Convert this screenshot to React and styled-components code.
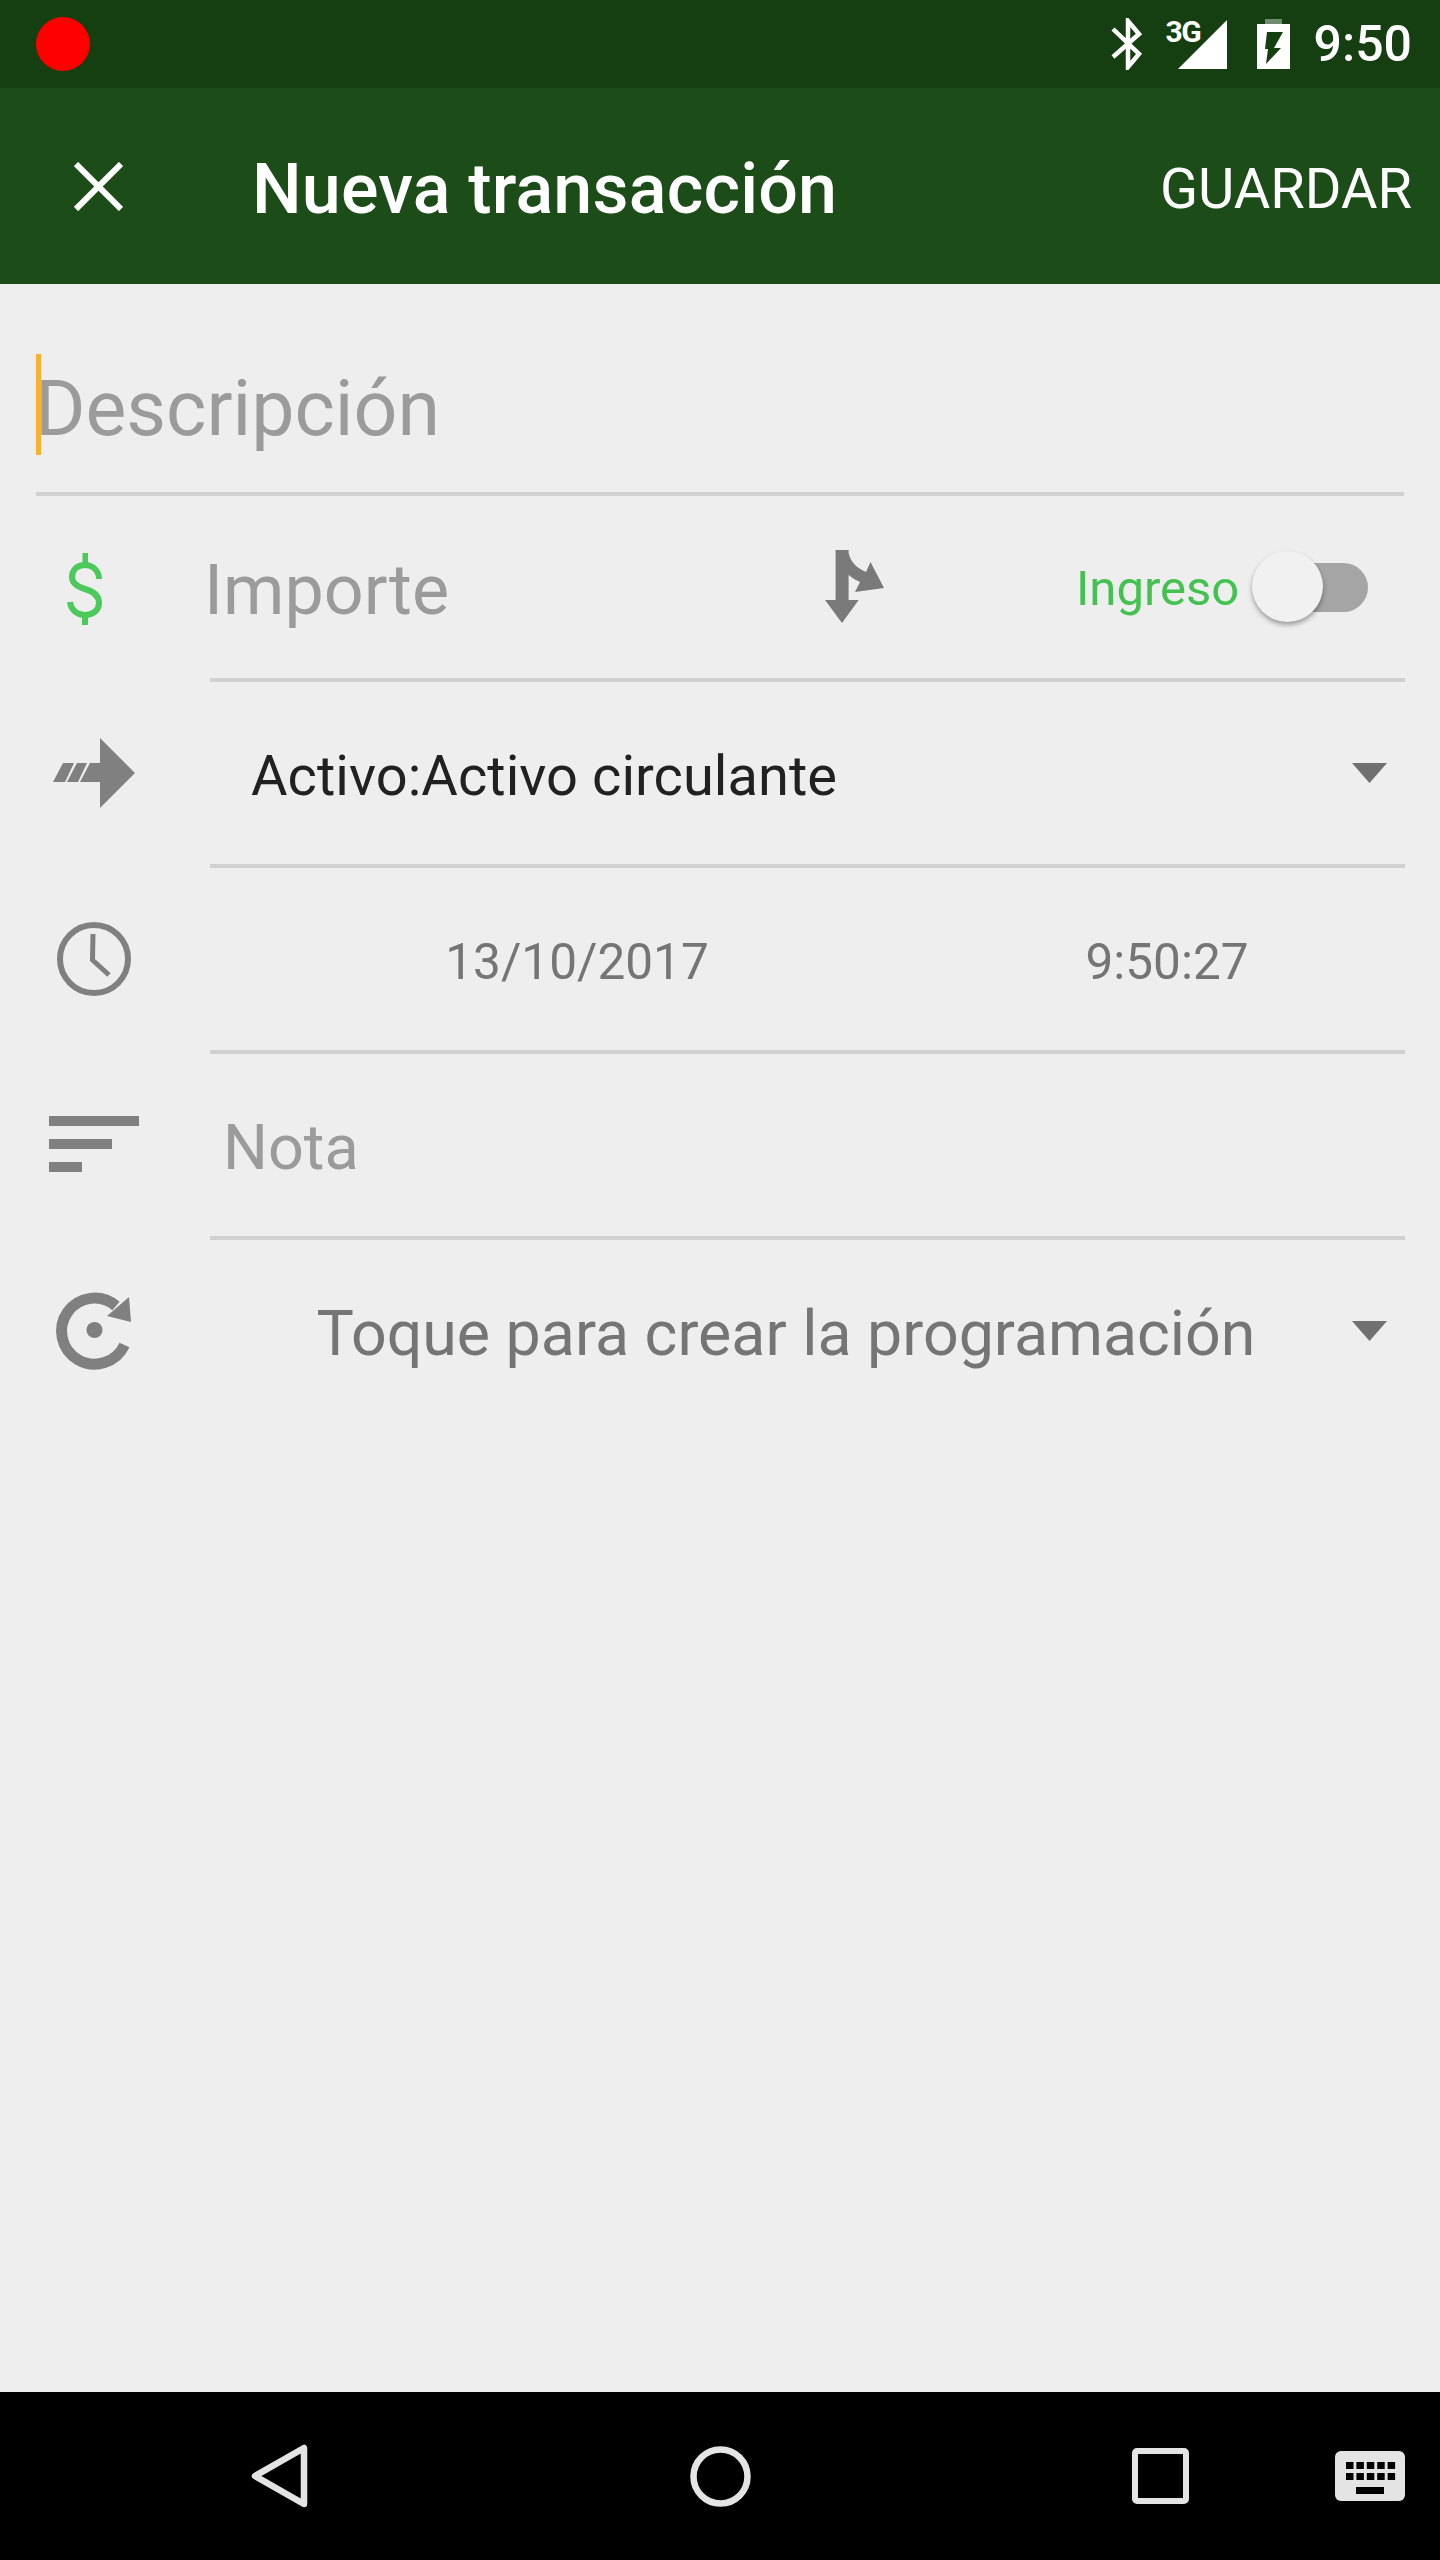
import React from 'react';
import styled, { createGlobalStyle } from 'styled-components';

const GlobalStyle = createGlobalStyle`
  html, body {
    margin: 0;
    padding: 0;
    background: #eeeeee;
  }
`;

const Page = styled.div`
  width: 1440px;
  height: 2560px;
  display: flex;
  flex-direction: column;
  background: #eeeeee;
  font-family: Roboto, "Liberation Sans", sans-serif;
  overflow: hidden;
`;

const StatusBar = styled.div`
  height: 88px;
  flex: none;
  display: flex;
  align-items: center;
  padding: 0 28px 0 36px;
  background: #153e11;
  color: #ffffff;
`;

const RecDot = styled.div`
  width: 54px;
  height: 54px;
  border-radius: 50%;
  background: #ff0000;
  margin-right: auto;
`;

const NetworkLabel = styled.span`
  font-size: 30px;
  font-weight: 700;
  line-height: 30px;
  letter-spacing: -1.5px;
  width: 31px;
  margin: -24px -19px 0 23px;
`;

const StatusIcon = styled.svg`
  display: block;
  flex: none;
  margin-left: ${(p) => p.$left || 0}px;
`;

const Clock = styled.span`
  font-size: 50px;
  font-weight: 500;
  line-height: 50px;
  margin-left: 24px;
`;

const AppBar = styled.div`
  height: 196px;
  flex: none;
  display: flex;
  align-items: center;
  padding: 0 28px 0 74px;
  background: #1c4c17;
  color: #ffffff;
`;

const Title = styled.div`
  flex: 1;
  margin-left: 129px;
  padding-top: 6px;
  font-size: 70px;
  font-weight: 500;
  line-height: 82px;
  letter-spacing: 0.2px;
`;

const SaveButton = styled.div`
  padding-top: 6px;
  font-size: 56px;
  line-height: 64px;
`;

const Form = styled.div`
  flex: 1;
  display: flex;
  flex-direction: column;
`;

const DescriptionRow = styled.div`
  height: 208px;
  margin: 0 36px 0 36px;
  display: flex;
  align-items: center;
  border-bottom: 4px solid #d0d0d0;
`;

const Caret = styled.div`
  width: 5px;
  height: 101px;
  margin-right: -6px;
  margin-top: 33px;
  background: #f7b12e;
`;

const DescriptionText = styled.span`
  font-size: 77px;
  line-height: 90px;
  color: #9b9b9b;
  margin-top: 42px;
`;

const Row = styled.div`
  height: 186px;
  display: flex;
  align-items: stretch;
`;

const RowIcon = styled.svg`
  display: block;
  flex: none;
  align-self: center;
  width: 120px;
  height: 120px;
  margin: -6px 56px 0 34px;
`;

const RowBody = styled.div`
  flex: 1;
  display: flex;
  align-items: center;
  margin-right: 35px;
  padding-top: 6px;
  box-sizing: border-box;
  border-bottom: ${(p) => (p.$plain ? '4px solid transparent' : '4px solid #d0d0d0')};
`;

const AmountText = styled.span`
  font-size: 70px;
  line-height: 82px;
  color: #9b9b9b;
  width: 621px;
  margin-left: -6px;
`;

const SplitIcon = styled.svg`
  display: block;
  flex: none;
  margin-top: -7px;
`;

const TypeLabel = styled.span`
  margin-left: 192px;
  margin-top: -3px;
  font-size: 49px;
  line-height: 58px;
  color: #43c250;
`;

const Switch = styled.div`
  position: relative;
  width: 116px;
  height: 71px;
  margin-left: 13px;
  margin-top: -7px;
  flex: none;
`;

const SwitchTrack = styled.div`
  position: absolute;
  left: 4px;
  right: 0;
  top: 12px;
  height: 49px;
  border-radius: 25px;
  background: #a5a5a5;
`;

const SwitchThumb = styled.div`
  position: absolute;
  left: 0;
  top: 0;
  width: 71px;
  height: 71px;
  border-radius: 50%;
  background: #f1f1f1;
  box-shadow: 0 3px 5px rgba(0, 0, 0, 0.35);
`;

const AccountText = styled.span`
  flex: 1;
  margin-left: 41px;
  font-size: 56px;
  line-height: 66px;
  letter-spacing: 0.05px;
  color: #212121;
`;

const Chevron = styled.svg`
  display: block;
  flex: none;
  margin-right: 18px;
  margin-top: -6px;
`;

const DateButton = styled.span`
  width: ${(p) => p.$width}px;
  text-align: center;
  font-size: 49.5px;
  line-height: 58px;
  color: #757575;
`;

const NoteText = styled.span`
  margin-left: 13px;
  font-size: 63px;
  line-height: 74px;
  color: #9b9b9b;
`;

const RecurrenceText = styled.span`
  flex: 1;
  text-align: center;
  font-size: 62.7px;
  line-height: 74px;
  color: #757575;
  padding-left: 10px;
`;

const NavBar = styled.div`
  height: 168px;
  flex: none;
  display: flex;
  align-items: center;
  background: #000000;
`;

const NavIcon = styled.svg`
  display: block;
  flex: none;
  margin-left: ${(p) => p.$left}px;
`;

const navGray = '#e4e4e4';
const iconGray = '#808080';
const keyColumns = [11, 21.4, 31.8, 42.2, 52.6];

const App = () => {
  return (
    <Page>
      <GlobalStyle />
      <StatusBar>
        <RecDot />
        <StatusIcon width="32" height="52" viewBox="0 0 32 52" fill="none" stroke="#fff" strokeWidth="4.5">
          <path d="M2 11 L28 36 L17 49 V3 L28 16 L2 39" />
        </StatusIcon>
        <NetworkLabel>3G</NetworkLabel>
        <StatusIcon width="49" height="49" viewBox="0 0 49 49">
          <path d="M49 0 V49 H0 Z" fill="#fff" />
        </StatusIcon>
        <StatusIcon $left={30} width="33" height="50" viewBox="0 0 33 50">
          <rect x="8" y="0" width="17" height="5" fill="#fff" opacity="0.4" />
          <path
            fillRule="evenodd"
            fill="#fff"
            d="M0 5 H33 V50 H0 Z M10 13 H26 L17 29 H24 L9 45 L11 30 H8 Z"
          />
        </StatusIcon>
        <Clock>9:50</Clock>
      </StatusBar>

      <AppBar>
        <svg width="49" height="49" viewBox="0 0 49 49" fill="none" stroke="#fff" strokeWidth="6">
          <path d="M2 2 L47 47 M47 2 L2 47" />
        </svg>
        <Title>Nueva transacción</Title>
        <SaveButton>GUARDAR</SaveButton>
      </AppBar>

      <Form>
        <DescriptionRow>
          <Caret />
          <DescriptionText>Descripción</DescriptionText>
        </DescriptionRow>

        <Row>
          <RowIcon viewBox="0 0 120 120">
            <path
              d="M65 53 C65 45 59 39 51 39 C43 39 38 44 38 51 C38 58 44 61 51 63 C58 65 65 69 65 77 C65 84 59 89 51 89 C43 89 37 84 36 76"
              fill="none"
              stroke="#4bc95a"
              strokeWidth="6"
            />
            <path d="M48.5 27 H54 V39 H48.5 Z M48 89 H54 V99 H48 Z" fill="#4bc95a" />
          </RowIcon>
          <RowBody>
            <AmountText>Importe</AmountText>
            <SplitIcon width="59" height="73" viewBox="0 0 59 73">
              <path
                d="M10.6 0 H23.6 V3 C25 9 29 16 37 20 L41 22 L45.5 12 L59 38 L30 42 L35 32 C31 30 27 28 23.6 25 V50 H33.7 L17 73 L0 50 H10.6 Z"
                fill="#7a7a7a"
              />
            </SplitIcon>
            <TypeLabel>Ingreso</TypeLabel>
            <Switch>
              <SwitchTrack />
              <SwitchThumb />
            </Switch>
          </RowBody>
        </Row>

        <Row>
          <RowIcon viewBox="0 0 120 120">
            <path
              d="M19 70 L29 51 H40 L31 70 Z M33 70 L43 51 H53 L44 70 Z M46 70 L56 51 H66 V26 L101 61 L66 96 V70 Z"
              fill={iconGray}
            />
          </RowIcon>
          <RowBody>
            <AccountText>Activo:Activo circulante</AccountText>
            <Chevron width="35" height="20" viewBox="0 0 35 20">
              <path d="M0 0 H35 L17.5 20 Z" fill="#707070" />
            </Chevron>
          </RowBody>
        </Row>

        <Row>
          <RowIcon viewBox="0 0 120 120" fill="none" stroke={iconGray}>
            <circle cx="60" cy="61" r="34" strokeWidth="6" />
            <path d="M59 36 L58.5 62 L75 77" strokeWidth="5" />
          </RowIcon>
          <RowBody>
            <DateButton $width={734}>13/10/2017</DateButton>
            <DateButton $width={446}>9:50:27</DateButton>
          </RowBody>
        </Row>

        <Row>
          <RowIcon viewBox="0 0 120 120" fill={iconGray}>
            <rect x="15" y="32" width="90" height="10" />
            <rect x="15" y="55" width="63" height="10" />
            <rect x="15" y="78" width="33" height="10" />
          </RowIcon>
          <RowBody>
            <NoteText>Nota</NoteText>
          </RowBody>
        </Row>

        <Row>
          <RowIcon viewBox="0 0 120 120">
            <path d="M82 36 A33 33 0 1 0 90.5 75" fill="none" stroke={iconGray} strokeWidth="11" />
            <path d="M95 27 L97 52 L73 46 L80 40 L88 33 Z" fill={iconGray} />
            <circle cx="60.5" cy="60" r="8" fill={iconGray} />
          </RowIcon>
          <RowBody $plain>
            <RecurrenceText>Toque para crear la programación</RecurrenceText>
            <Chevron width="35" height="20" viewBox="0 0 35 20">
              <path d="M0 0 H35 L17.5 20 Z" fill="#707070" />
            </Chevron>
          </RowBody>
        </Row>
      </Form>

      <NavBar>
        <NavIcon $left={251} width="57" height="66" viewBox="0 0 57 66">
          <path d="M53 5 V61 L4 33 Z" fill="none" stroke={navGray} strokeWidth="6.5" strokeLinejoin="round" />
        </NavIcon>
        <NavIcon $left={382} width="61" height="61" viewBox="0 0 61 61">
          <circle cx="30.5" cy="30.5" r="27" fill="none" stroke={navGray} strokeWidth="6.5" />
        </NavIcon>
        <NavIcon $left={381} width="57" height="56" viewBox="0 0 57 56">
          <rect x="3" y="3" width="51" height="50" rx="2" fill="none" stroke={navGray} strokeWidth="6" />
        </NavIcon>
        <NavIcon $left={146} width="70" height="50" viewBox="0 0 70 50">
          <rect width="70" height="50" rx="6" fill={navGray} />
          {keyColumns.map((x) => (
            <rect key={`a${x}`} x={x} y="11" width="7.5" height="7" fill="#000" />
          ))}
          {keyColumns.map((x) => (
            <rect key={`b${x}`} x={x} y="22" width="7.5" height="7" fill="#000" />
          ))}
          <rect x="21" y="36" width="28" height="7" fill="#000" />
        </NavIcon>
      </NavBar>
    </Page>
  );
};

export default App;
